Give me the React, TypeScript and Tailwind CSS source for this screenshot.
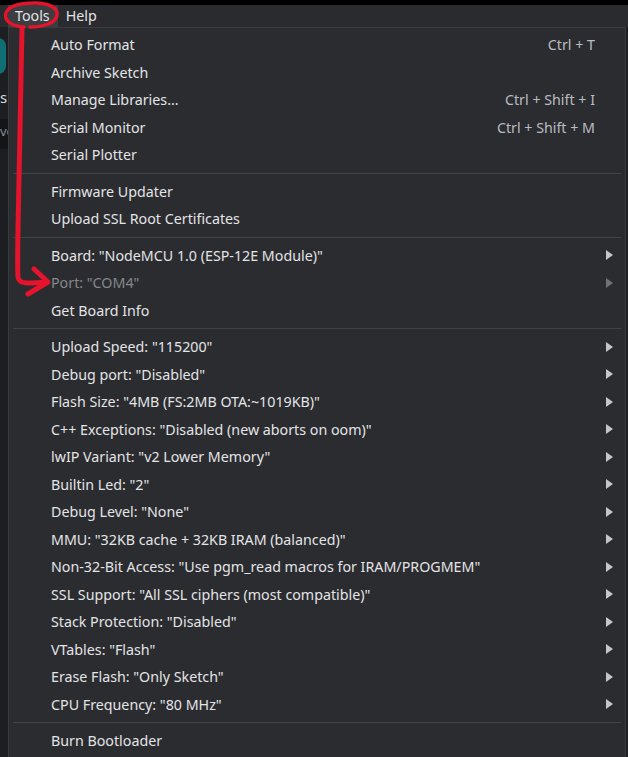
import React from "react";

type Item = { label: string; shortcut?: string; sub?: boolean; disabled?: boolean };

const groups: Item[][] = [
  [
    { label: "Auto Format", shortcut: "Ctrl + T" },
    { label: "Archive Sketch" },
    { label: "Manage Libraries...", shortcut: "Ctrl + Shift + I" },
    { label: "Serial Monitor", shortcut: "Ctrl + Shift + M" },
    { label: "Serial Plotter" },
  ],
  [{ label: "Firmware Updater" }, { label: "Upload SSL Root Certificates" }],
  [
    { label: 'Board: "NodeMCU 1.0 (ESP-12E Module)"', sub: true },
    { label: 'Port: "COM4"', sub: true, disabled: true },
    { label: "Get Board Info" },
  ],
  [
    { label: 'Upload Speed: "115200"', sub: true },
    { label: 'Debug port: "Disabled"', sub: true },
    { label: 'Flash Size: "4MB (FS:2MB OTA:~1019KB)"', sub: true },
    { label: 'C++ Exceptions: "Disabled (new aborts on oom)"', sub: true },
    { label: 'lwIP Variant: "v2 Lower Memory"', sub: true },
    { label: 'Builtin Led: "2"', sub: true },
    { label: 'Debug Level: "None"', sub: true },
    { label: 'MMU: "32KB cache + 32KB IRAM (balanced)"', sub: true },
    { label: 'Non-32-Bit Access: "Use pgm_read macros for IRAM/PROGMEM"', sub: true },
    { label: 'SSL Support: "All SSL ciphers (most compatible)"', sub: true },
    { label: 'Stack Protection: "Disabled"', sub: true },
    { label: 'VTables: "Flash"', sub: true },
    { label: 'Erase Flash: "Only Sketch"', sub: true },
    { label: 'CPU Frequency: "80 MHz"', sub: true },
  ],
  [{ label: "Burn Bootloader" }],
];

function Arrow({ dim }: { dim?: boolean }) {
  return (
    <svg width="8" height="10" viewBox="0 0 8 10" className="shrink-0">
      <path d="M0 0 L7 5 L0 10 Z" fill={dim ? "#6f7174" : "#c4c6c9"} />
    </svg>
  );
}

function Row({ item }: { item: Item }) {
  return (
    <div className="flex h-[27.5px] items-center pl-[42px] pr-[11px]">
      <span className={`flex-1 whitespace-nowrap ${item.disabled ? "text-[#85878a]" : "text-[#e3e4e6]"}`}>
        {item.label}
      </span>
      {item.shortcut && <span className="mr-[19px] whitespace-nowrap text-[#b9bcc0]">{item.shortcut}</span>}
      {item.sub && <Arrow dim={item.disabled} />}
    </div>
  );
}

export default function App() {
  return (
    <div
      className="relative h-[757px] w-[628px] overflow-hidden bg-[#1d1e21] text-[14.25px]"
      style={{ fontFamily: '"Noto Sans", "Open Sans", sans-serif' }}
    >
      <div className="h-[5px] bg-black" />
      <div className="flex">
        {/* editor behind the menu */}
        <div className="flex w-[8px] shrink-0 flex-col">
          <div className="h-[22px] bg-[#2a2b2f]" />
          <div className="mt-[11px] h-[36px] w-[16px] -ml-[10px] rounded-full bg-[#0f6f72]" />
          <div className="mt-[16px] text-[15px] leading-none text-[#d9dadc]">s</div>
          <div className="mt-[14px] h-[30px] overflow-hidden bg-[#141517] pt-[6px] text-[13px] leading-none text-[#8d8f92]">
            vo
          </div>
        </div>
        <div className="flex-1">
          <div className="flex h-[22px] items-center bg-[#2a2b2f]">
            <div className="flex h-full items-center bg-[#3b3d41] pl-[7px] pr-[8px] text-[#e3e4e6]">Tools</div>
            <div className="px-[8px] text-[#e3e4e6]">Help</div>
          </div>
          <div className="h-[730px] w-[618px] border-r border-t border-l border-[#3a3b3f] bg-[#2b2c30] pt-[3px]">
            {groups.map((g, gi) => (
              <div key={gi}>
                {gi > 0 && <div className="mx-[4px] my-[4px] h-px bg-[#414246]" />}
                {g.map((it) => (
                  <Row key={it.label} item={it} />
                ))}
              </div>
            ))}
          </div>
        </div>
      </div>

      {/* red hand-drawn annotation */}
      <svg className="pointer-events-none absolute left-0 top-0" width="628" height="757">
        <path
          d="M24 27 C10 26 4 20 6 13 C9 5 22 3 35 3 C49 3 58 8 57 15 C56 23 44 27 30 27"
          fill="none"
          stroke="#e5132b"
          strokeWidth="3.5"
          strokeLinecap="round"
        />
        <path
          d="M22 28 C21 60 20 120 19 180 C18 230 17 262 18 277 C19 284 26 284 46 282"
          fill="none"
          stroke="#e5132b"
          strokeWidth="5"
          strokeLinecap="round"
          strokeLinejoin="round"
        />
        <path
          d="M34 269 L48 282 L28 294"
          fill="none"
          stroke="#e5132b"
          strokeWidth="5"
          strokeLinecap="round"
          strokeLinejoin="round"
        />
      </svg>
    </div>
  );
}
